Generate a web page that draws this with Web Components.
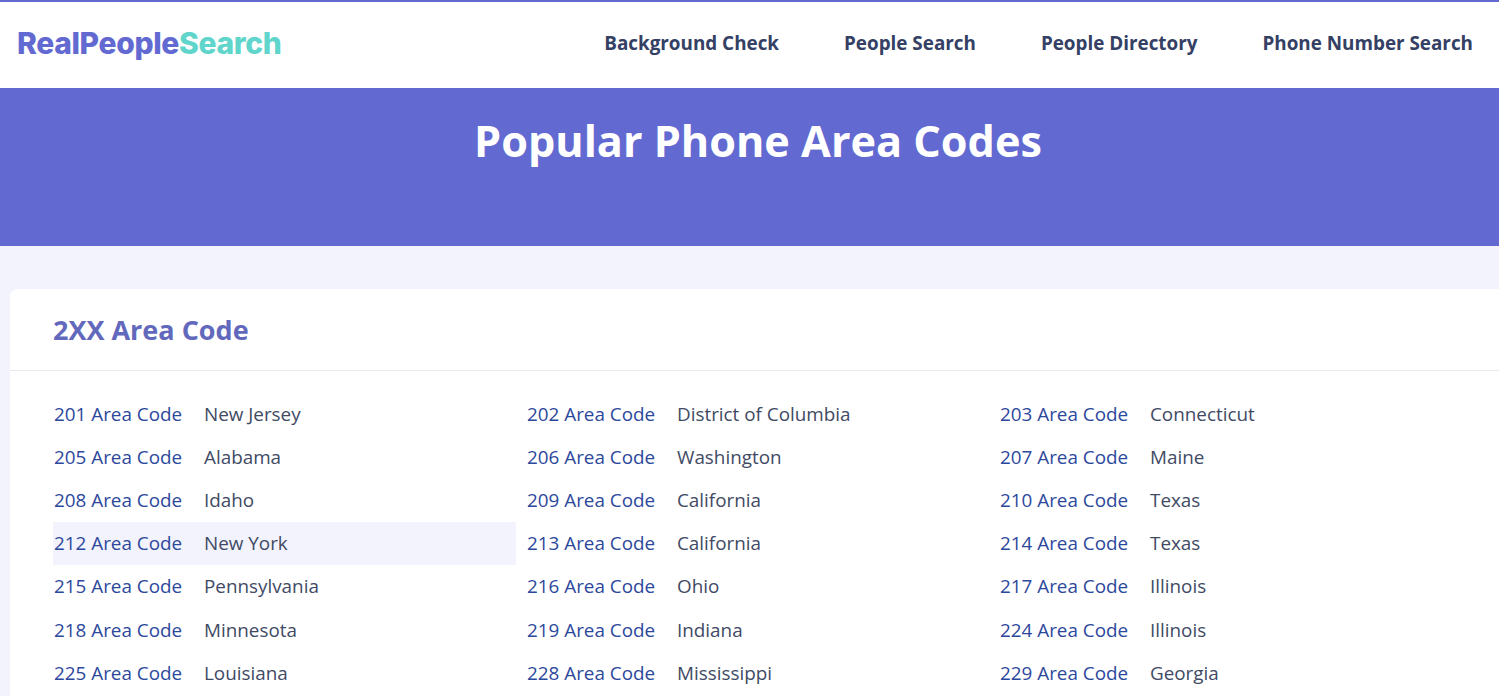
<!DOCTYPE html>
<html lang="en">
<head>
<meta charset="utf-8">
<title>Popular Phone Area Codes</title>
<style>
    html, body { margin: 0; height: 696px; overflow: hidden; background: #f3f3fd; font-family: "Open Sans", sans-serif; }
</style>
</head>
<body>
<site-header></site-header>
<page-hero>Popular Phone Area Codes</page-hero>
<code-card heading="2XX Area Code">
    <code-row code="201" place="New Jersey"></code-row>
    <code-row code="202" place="District of Columbia"></code-row>
    <code-row code="203" place="Connecticut"></code-row>
    <code-row code="205" place="Alabama"></code-row>
    <code-row code="206" place="Washington"></code-row>
    <code-row code="207" place="Maine"></code-row>
    <code-row code="208" place="Idaho"></code-row>
    <code-row code="209" place="California"></code-row>
    <code-row code="210" place="Texas"></code-row>
    <code-row code="212" place="New York" active></code-row>
    <code-row code="213" place="California"></code-row>
    <code-row code="214" place="Texas"></code-row>
    <code-row code="215" place="Pennsylvania"></code-row>
    <code-row code="216" place="Ohio"></code-row>
    <code-row code="217" place="Illinois"></code-row>
    <code-row code="218" place="Minnesota"></code-row>
    <code-row code="219" place="Indiana"></code-row>
    <code-row code="224" place="Illinois"></code-row>
    <code-row code="225" place="Louisiana"></code-row>
    <code-row code="228" place="Mississippi"></code-row>
    <code-row code="229" place="Georgia"></code-row>
</code-card>
<script>
class SiteHeader extends HTMLElement {
    connectedCallback() {
        this.attachShadow({ mode: 'open' });
        this.shadowRoot.innerHTML = `
            <style>
                :host {
                    display: flex;
                    justify-content: space-between;
                    align-items: center;
                    box-sizing: border-box;
                    height: 88px;
                    padding: 0 26px 5px 17px;
                    background: #fff;
                    border-top: 2px solid #6269d1;
                }
                .logo {
                    font-family: "Inter", sans-serif;
                    font-weight: 800;
                    font-size: 30px;
                    letter-spacing: -0.35px;
                    color: #6269d1;
                    text-decoration: none;
                }
                .logo span { color: #5fd5cb; }
                nav { display: flex; gap: 65px; }
                nav a {
                    font-weight: 700;
                    font-size: 18.85px;
                    color: #344064;
                    text-decoration: none;
                }
            </style>
            <a class="logo" href="#">RealPeople<span>Search</span></a>
            <nav>
                <a href="#">Background Check</a>
                <a href="#">People Search</a>
                <a href="#">People Directory</a>
                <a href="#">Phone Number Search</a>
            </nav>
        `;
    }
}

class PageHero extends HTMLElement {
    connectedCallback() {
        this.attachShadow({ mode: 'open' });
        this.shadowRoot.innerHTML = `
            <style>
                :host {
                    display: block;
                    box-sizing: border-box;
                    height: 158px;
                    padding-top: 22px;
                    background: #6269d1;
                    color: #fff;
                    text-align: center;
                    font-weight: 700;
                    font-size: 43.2px;
                    line-height: 62px;
                }
                div { padding-left: 17px; }
            </style>
            <div><slot></slot></div>
        `;
    }
}

class CodeCard extends HTMLElement {
    connectedCallback() {
        this.attachShadow({ mode: 'open' });
        this.shadowRoot.innerHTML = `
            <style>
                :host {
                    display: block;
                    min-height: 420px;
                    margin: 43px -20px 0 10px;
                    background: #fff;
                    border-radius: 8px 0 0 0;
                }
                h2 {
                    margin: 0;
                    height: 82px;
                    box-sizing: border-box;
                    padding: 0 0 0 43px;
                    border-bottom: 1px solid #e8e9ee;
                    color: #6269bd;
                    font-size: 27px;
                    font-weight: 700;
                    line-height: 81px;
                }
                .rows {
                    display: grid;
                    grid-template-columns: repeat(3, 463px);
                    column-gap: 10px;
                    grid-auto-rows: 43.17px;
                    padding: 21.22px 0 0 43px;
                }
            </style>
            <h2></h2>
            <div class="rows"><slot></slot></div>
        `;
        this.shadowRoot.querySelector('h2').textContent = this.getAttribute('heading');
    }
}

class CodeRow extends HTMLElement {
    connectedCallback() {
        this.attachShadow({ mode: 'open' });
        this.shadowRoot.innerHTML = `
            <style>
                :host {
                    display: flex;
                    align-items: center;
                    font-size: 18.85px;
                    color: #414a64;
                }
                :host([active]) { background: #f3f3fd; }
                a {
                    flex: 0 0 150px;
                    padding-left: 1px;
                    color: #2c489c;
                    text-decoration: none;
                }
            </style>
            <a href="#"></a>
            <span></span>
        `;
        this.shadowRoot.querySelector('a').textContent = this.getAttribute('code') + ' Area Code';
        this.shadowRoot.querySelector('span').textContent = this.getAttribute('place');
    }
}

customElements.define('site-header', SiteHeader);
customElements.define('page-hero', PageHero);
customElements.define('code-card', CodeCard);
customElements.define('code-row', CodeRow);
</script>
</body>
</html>
